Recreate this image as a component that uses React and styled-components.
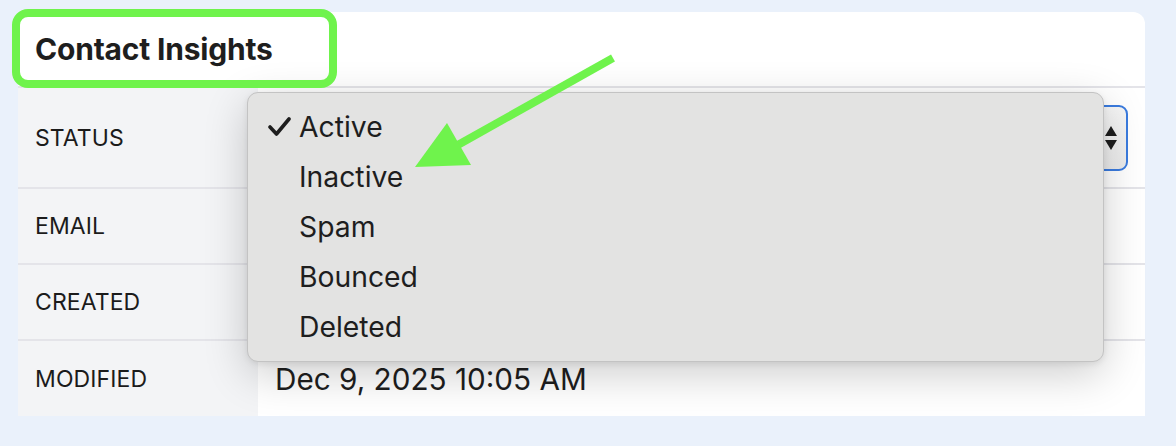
import React from 'react'
import styled, { createGlobalStyle } from 'styled-components'

const GlobalStyle = createGlobalStyle`
  html, body {
    margin: 0;
    background: #eaf1fb;
    font-family: Inter, "Noto Sans", sans-serif;
    color: #1e1e1e;
  }
`

const Page = styled.div`
  position: relative;
  width: 1176px;
  height: 446px;
  box-sizing: border-box;
  padding: 12px 31px 30px 18px;
`

const Card = styled.div`
  background: #ffffff;
  border-radius: 12px 12px 0 0;
`

const Header = styled.div`
  position: relative;
  height: 76px;
  box-sizing: border-box;
  display: flex;
  align-items: center;
  padding-left: 17px;
  border-bottom: 2px solid #e4e4e9;
`

const Title = styled.h2`
  margin: 0;
  font-size: 30px;
  font-weight: 700;
  letter-spacing: -0.2px;
`

// annotation box drawn round the title in the screenshot
const Highlight = styled.div`
  position: absolute;
  left: -6px;
  top: -3px;
  width: 325px;
  height: 79px;
  box-sizing: border-box;
  border: 8px solid #6ff34c;
  border-radius: 16px;
  z-index: 3;
`

const Row = styled.div`
  display: grid;
  grid-template-columns: 240px 1fr;
  height: ${p => p.$h}px;
  box-sizing: border-box;
  border-bottom: ${p => (p.$last ? 'none' : '2px solid #e4e4e9')};
`

const Label = styled.div`
  background: #f3f4f6;
  display: flex;
  align-items: center;
  padding-left: 17px;
  font-size: 23px;
  letter-spacing: 0.1px;
  color: #1b1b1b;
`

const Value = styled.div`
  display: flex;
  align-items: center;
  padding: 0 17px;
  font-size: 29.7px;
`

const SelectWrap = styled.div`
  position: relative;
  flex: 1;
  height: 66px;
`

const SelectBox = styled.div`
  height: 100%;
  box-sizing: border-box;
  border: 2px solid #3a7bdf;
  border-radius: 9px;
  background: linear-gradient(#f6f6f6, #ececec);
  display: flex;
  align-items: center;
  justify-content: flex-end;
  padding-right: 8px;
`

const Stepper = styled.svg`
  width: 14px;
  height: 26px;
`

const Menu = styled.ul`
  position: absolute;
  left: -28px;
  right: 24px;
  top: -13px;
  margin: 0;
  padding: 9px 0;
  list-style: none;
  background: #e3e3e2;
  border: 1px solid #c3c3c3;
  border-radius: 11px;
  box-shadow: 0 12px 44px rgba(0, 0, 0, 0.2), 0 2px 6px rgba(0, 0, 0, 0.08);
  z-index: 2;
`

const Item = styled.li`
  height: 50px;
  display: flex;
  align-items: center;
  padding-left: 20px;
  font-size: 28.3px;
  color: #1e1e1e;
`

const Check = styled.span`
  width: 31px;
  display: flex;
  align-items: center;
`

const Arrow = styled.svg`
  position: absolute;
  left: 400px;
  top: 40px;
  z-index: 4;
`

const statuses = ['Active', 'Inactive', 'Spam', 'Bounced', 'Deleted']

function CheckMark () {
  return (
    <svg width='24' height='20' viewBox='0 0 24 20'>
      <polyline points='2,10 8.5,17 21,2' fill='none' stroke='#1e1e1e' strokeWidth='3.6' strokeLinecap='round' strokeLinejoin='round' />
    </svg>
  )
}

export default function App () {
  return (
    <Page>
      <GlobalStyle />
      <Card>
        <Header>
          <Title>Contact Insights</Title>
          <Highlight />
        </Header>
        <Row $h={101}>
          <Label>STATUS</Label>
          <Value>
            <SelectWrap>
              <SelectBox>
                <Stepper viewBox='0 0 14 26'>
                  <polygon points='7,1 13,11 1,11' fill='#1e1e1e' />
                  <polygon points='1,15 13,15 7,25' fill='#1e1e1e' />
                </Stepper>
              </SelectBox>
              <Menu>
                {statuses.map(s => (
                  <Item key={s}>
                    <Check>{s === 'Active' && <CheckMark />}</Check>
                    {s}
                  </Item>
                ))}
              </Menu>
            </SelectWrap>
          </Value>
        </Row>
        <Row $h={76}>
          <Label>EMAIL</Label>
          <Value />
        </Row>
        <Row $h={76}>
          <Label>CREATED</Label>
          <Value />
        </Row>
        <Row $h={75} $last>
          <Label>MODIFIED</Label>
          <Value>Dec 9, 2025 10:05 AM</Value>
        </Row>
      </Card>
      <Arrow width='230' height='140' viewBox='0 0 230 140'>
        <line x1='213' y1='18' x2='56' y2='106' stroke='#6ff34c' strokeWidth='8' />
        <polygon points='15,127 47,83 71,125' fill='#6ff34c' />
      </Arrow>
    </Page>
  )
}
